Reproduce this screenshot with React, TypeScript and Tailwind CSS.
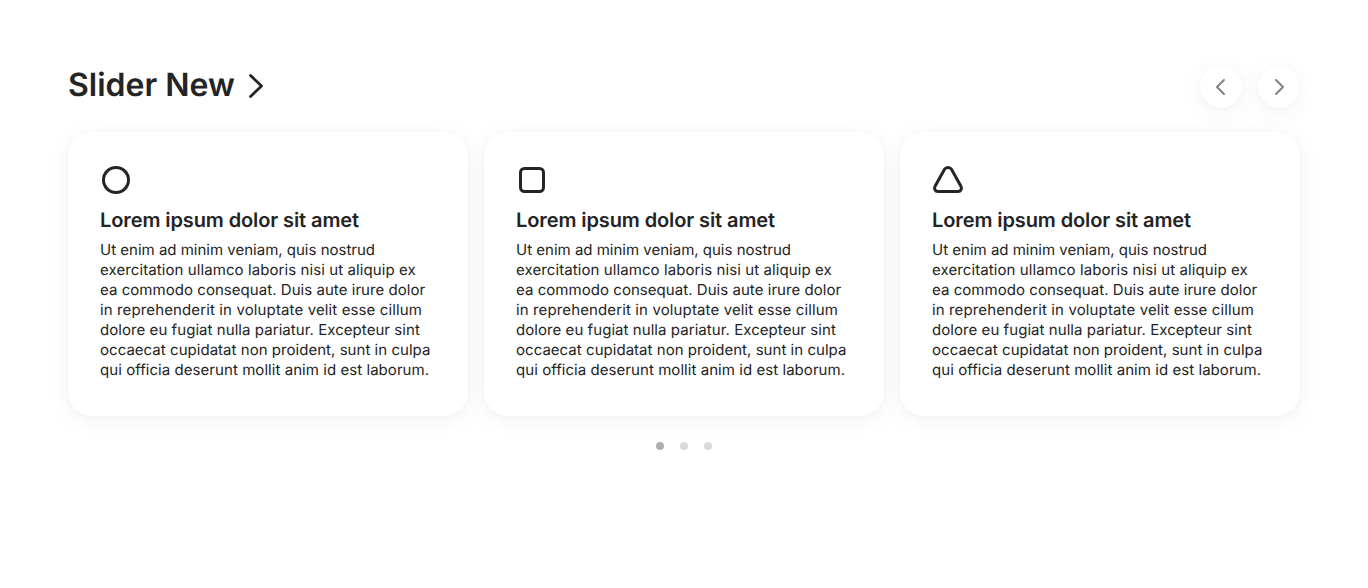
const lines = [
  { text: "Ut enim ad minim veniam, quis nostrud", spacing: "tracking-normal" },
  { text: "exercitation ullamco laboris nisi ut aliquip ex", spacing: "tracking-[0.09px]" },
  { text: "ea commodo consequat. Duis aute irure dolor", spacing: "tracking-[0.045px]" },
  { text: "in reprehenderit in voluptate velit esse cillum", spacing: "tracking-[0.125px]" },
  { text: "dolore eu fugiat nulla pariatur. Excepteur sint", spacing: "tracking-[0.06px]" },
  { text: "occaecat cupidatat non proident, sunt in culpa", spacing: "tracking-[0.035px]" },
  { text: "qui officia deserunt mollit anim id est laborum.", spacing: "tracking-[0.055px]" },
];

const shapes = [
  <circle key="circle" cx="16" cy="16" r="12.5" />,
  <rect key="square" x="4.5" y="4.5" width="23" height="23" rx="4" />,
  <path key="triangle" d="M12.4 5.6 3.2 21.9C1.7 24.6 3 27.5 6.1 27.5H25.9C29 27.5 30.3 24.6 28.8 21.9L19.6 5.6C18 2.8 14 2.8 12.4 5.6Z" />,
];

function Arrow({ next = false }: { next?: boolean }) {
  return (
    <button aria-label={next ? "Next" : "Previous"} className="grid size-[42px] place-items-center rounded-full bg-white shadow-[0_4px_24px_rgba(0,0,0,0.05),0_1px_4px_rgba(0,0,0,0.03)]">
      <svg className="size-6" viewBox="0 0 24 24" fill="none" stroke="#808080" strokeWidth="1.9" strokeLinecap="round" strokeLinejoin="round">
        <path d={next ? "m9 5 7 7-7 7" : "m15 5-7 7 7 7"} />
      </svg>
    </button>
  );
}

export default function App() {
  return (
    <main className="h-[588px] overflow-hidden bg-white px-[68px] pt-[65px] font-['Inter',sans-serif] text-[#242424] antialiased [text-rendering:geometricPrecision]">
      <header className="flex h-11 items-center justify-between">
        <h1 className="flex items-center pb-1 text-[32px] leading-10 font-semibold">
          Slider New
          <svg className="mt-0.5 ml-[5px] size-8" viewBox="0 0 32 32" fill="none" stroke="currentColor" strokeWidth="2.8" strokeLinecap="round" strokeLinejoin="round">
            <path d="m10.5 5.5 11 10.5-11 10.5" />
          </svg>
        </h1>
        <div className="flex gap-4">
          <Arrow />
          <Arrow next />
        </div>
      </header>
      <section className="mt-[23px] grid grid-cols-3 gap-4">
        {shapes.map((shape, i) => (
          <article key={i} className="h-[284px] rounded-3xl bg-white p-8 shadow-[0_4px_24px_rgba(0,0,0,0.05),0_1px_4px_rgba(0,0,0,0.03)]">
            <svg className="size-8" viewBox="0 0 32 32" fill="none" stroke="currentColor" strokeWidth="3">{shape}</svg>
            <h2 className="mt-3 text-xl leading-6 font-semibold tracking-[-0.1px]">Lorem ipsum dolor sit amet</h2>
            <p className="mt-2 text-[15px] leading-5">
              {lines.map((line) => (
                <span key={line.text} className={`block whitespace-nowrap ${line.spacing}`}>{line.text} </span>
              ))}
            </p>
          </article>
        ))}
      </section>
      <div className="mt-[26px] flex justify-center gap-4">
        <i className="size-2 rounded-full bg-[#b0b0b0]" />
        <i className="size-2 rounded-full bg-[#d9d9d9]" />
        <i className="size-2 rounded-full bg-[#d9d9d9]" />
      </div>
    </main>
  );
}
